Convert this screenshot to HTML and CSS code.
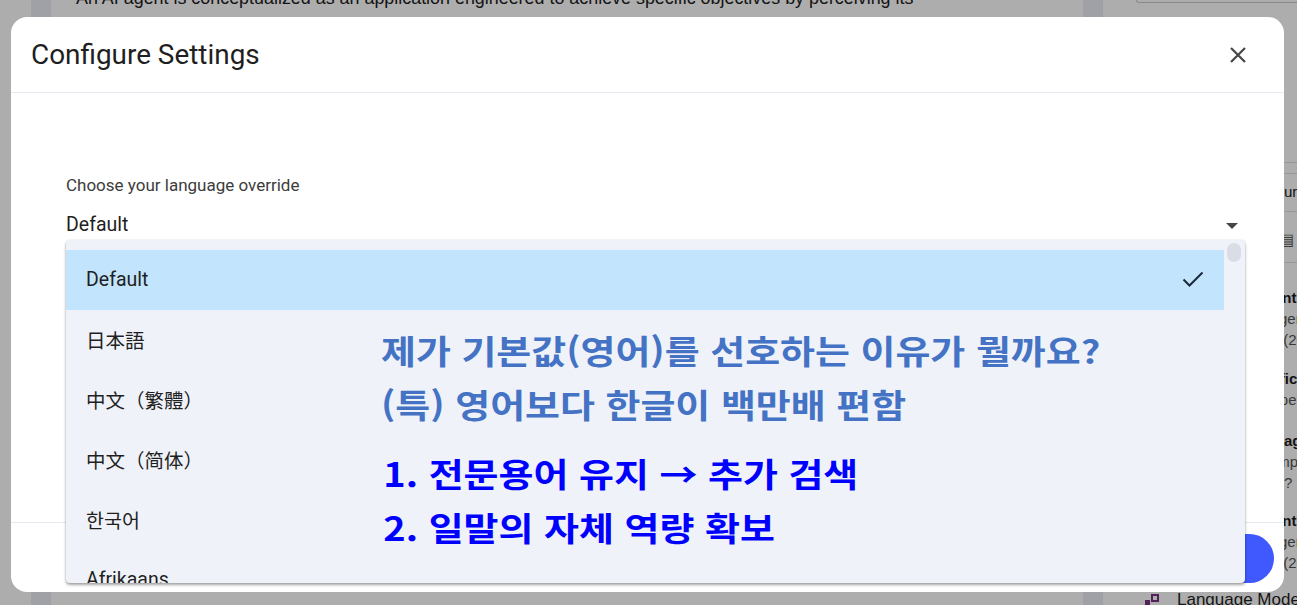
FILE: index.html
```html
<!DOCTYPE html>
<html lang="en">
<head>
<meta charset="utf-8">
<title>Configure Settings</title>
<link rel="stylesheet" href="styles.css">
</head>
<body>
<div class="page">
  <div class="gutter"></div>
  <div class="rail"></div>
  <main class="main">
    <p class="lead">An AI agent is conceptualized as an application engineered to achieve specific objectives by perceiving its</p>
    <div class="spacer"></div>
    <p class="foot-text">Thus an agent can plan, reason and act on its own to attain the desired state within its environment</p>
  </main>
  <div class="rail"></div>
  <aside class="side">
    <div class="side-search"></div>
    <div class="side-row side-row-a"></div>
    <div class="side-row side-row-a2"></div>
    <div class="side-row side-row-b">Features</div>
    <div class="side-row side-row-c"><span class="side-ico">&#9636;</span></div>
    <div class="side-list">
      <div class="side-item">
        <div class="side-title">Agentic AI Systems</div>
        <div class="side-sub">Imagery models</div>
        <div class="side-sub">Vol. (2024)</div>
      </div>
      <div class="side-item short">
        <div class="side-title">Artificial agents</div>
        <div class="side-sub">Scope and limits</div>
      </div>
      <div class="side-item">
        <div class="side-title">Management agents</div>
        <div class="side-sub">Prompting methods</div>
        <div class="side-sub">Why?</div>
      </div>
      <div class="side-item">
        <div class="side-title">Agentic AI Systems</div>
        <div class="side-sub">Imagery models</div>
        <div class="side-sub">Vol. (2023)</div>
      </div>
    </div>
    <div class="side-foot">
      <svg class="side-foot-ico" width="18" height="16" viewBox="0 0 18 16"><rect x="2" y="8" width="5" height="5" fill="#7b2d83"/><rect x="9" y="3" width="6" height="6" fill="none" stroke="#7b2d83" stroke-width="2"/></svg>
      <span>Language Models</span>
    </div>
  </aside>
</div>

<div class="scrim"></div>

<section class="dialog" role="dialog" aria-label="Configure Settings">
  <header class="dlg-head">
    <h1 class="dlg-title">Configure Settings</h1>
    <button class="dlg-close" aria-label="Close">
      <svg width="24" height="24" viewBox="0 0 24 24"><path d="M5 5 L19 19 M19 5 L5 19" stroke="#444746" stroke-width="2.2" fill="none"/></svg>
    </button>
  </header>
  <div class="dlg-body">
    <div class="field-label">Choose your language override</div>
    <div class="select">
      <span class="select-value">Default</span>
      <svg class="select-arrow" width="12" height="6" viewBox="0 0 12 6"><path d="M0 0 H12 L6 6 Z" fill="#444746"/></svg>
    </div>
  </div>
  <footer class="dlg-foot">
    <button class="save-btn">Save</button>
  </footer>

  <div class="menu" role="listbox">
    <ul class="menu-list">
      <li class="menu-item selected">
        <span>Default</span>
        <svg width="24" height="24" viewBox="0 0 24 24"><path d="M2.5 12.5 L8.5 18.5 L21.5 5.5" stroke="#1b2a3a" stroke-width="2" fill="none"/></svg>
      </li>
      <li class="menu-item" lang="ja">日本語</li>
      <li class="menu-item" lang="zh-Hant">中文（繁體）</li>
      <li class="menu-item" lang="zh-Hans">中文（简体）</li>
      <li class="menu-item" lang="ko">한국어</li>
      <li class="menu-item">Afrikaans</li>
    </ul>
    <div class="menu-scroll"><div class="menu-thumb"></div></div>

    <div class="note" lang="ko">
      <p class="note-q">제가 기본값(영어)를 선호하는 이유가 뭘까요?</p>
      <p class="note-q">(특) 영어보다 한글이 백만배 편함</p>
      <p class="note-a first">1. 전문용어 유지 → 추가 검색</p>
      <p class="note-a">2. 일말의 자체 역량 확보</p>
    </div>
  </div>
</section>
</body>
</html>
```

FILE: styles.css
```css
* { box-sizing: border-box; }

html, body {
  margin: 0;
  padding: 0;
  width: 1297px;
  height: 605px;
  overflow: hidden;
}

body {
  position: relative;
  background: #ffffff;
  font-family: Roboto, "Noto Sans CJK JP", "Noto Sans CJK KR", sans-serif;
  color: #1f1f1f;
}

/* ---------- background page ---------- */
.page {
  display: flex;
  height: 605px;
}

.gutter { width: 31px; flex: none; }

.rail {
  width: 20px;
  flex: none;
  background: #ececf6;
}

.main {
  width: 1032px;
  flex: none;
  padding-left: 25px;
  display: flex;
  flex-direction: column;
  font-family: "Liberation Sans", Arial, sans-serif;
}

.lead {
  margin: -12px 0 0;
  font-size: 17.9px;
  line-height: 20px;
  color: #202020;
  white-space: nowrap;
}

.spacer { flex: 1; }

.foot-text {
  margin: 0 0 11px;
  font-size: 17px;
  line-height: 20px;
  color: #202020;
  white-space: nowrap;
}

.side {
  flex: 1;
  display: flex;
  flex-direction: column;
  font-family: "Liberation Sans", Arial, sans-serif;
  font-size: 15px;
  color: #222;
}

.side-search {
  height: 3px;
  margin-left: 33px;
  border: 1px solid #c9c9d3;
  border-top: none;
  border-radius: 0 0 0 6px;
  flex: none;
}

.side-row { flex: none; border-bottom: 1px solid #dedee6; }
.side-row-a { height: 160px; }
.side-row-a2 { height: 11px; }
.side-row-b { height: 38px; padding: 9px 0 0 151px; white-space: nowrap; line-height: 18px; }
.side-row-c { height: 51px; padding: 19px 0 0 176px; color: #555; line-height: 18px; }
.side-ico { font-size: 16px; }

.side-list {
  padding: 24px 0 0 151px;
  white-space: nowrap;
  flex: 1;
}

.side-item { height: 81px; line-height: 21px; }
.side-item.short { height: 62px; }
.side-item:nth-child(3) { height: 80px; }

.side-title { font-weight: 700; color: #1b1b1b; }
.side-sub { color: #555; }

.side-foot {
  flex: none;
  height: 17px;
  display: flex;
  align-items: center;
  gap: 16px;
  padding-left: 40px;
  font-size: 17px;
  color: #1f1f1f;
  white-space: nowrap;
}

/* ---------- scrim ---------- */
.scrim {
  position: absolute;
  inset: 0;
  background: rgba(0, 0, 0, 0.32);
}

/* ---------- dialog ---------- */
.dialog {
  position: absolute;
  left: 11px;
  top: 17px;
  width: 1273px;
  height: 575px;
  background: #ffffff;
  border-radius: 16px;
  display: flex;
  flex-direction: column;
}

.dlg-head {
  height: 76px;
  flex: none;
  display: flex;
  align-items: center;
  justify-content: space-between;
  padding: 0 34px 0 20px;
  border-bottom: 1px solid #e7e8f0;
}

.dlg-title {
  margin: 0;
  font-size: 27.9px;
  font-weight: 400;
  color: #1f1f1f;
}

.dlg-close {
  width: 24px;
  height: 24px;
  padding: 0;
  border: none;
  background: none;
  display: flex;
}

.dlg-body {
  flex: 1;
  padding: 81px 39px 0 55px;
}

.field-label {
  font-size: 17px;
  line-height: 22px;
  color: #3c3c3c;
}

.select {
  margin-top: 14px;
  height: 28px;
  display: flex;
  align-items: center;
  justify-content: space-between;
  padding-right: 7px;
}

.select-value {
  font-size: 19.5px;
  color: #1f1f1f;
}

.select-arrow { margin-top: 3px; }

.dlg-foot {
  height: 70px;
  flex: none;
  border-top: 1px solid #e7e8f0;
  display: flex;
  align-items: center;
  justify-content: flex-end;
  padding: 0 10px 0 0;
}

.save-btn {
  width: 120px;
  height: 49px;
  border: none;
  border-radius: 25px;
  background: #3f59ff;
  color: #fff;
  font: 500 16px Roboto, sans-serif;
  margin-top: 2px;
}

/* ---------- dropdown menu ---------- */
.menu {
  position: absolute;
  left: 55px;
  top: 223px;
  width: 1179px;
  height: 343px;
  background: #eff2f8;
  border-radius: 4px;
  box-shadow: 0 2px 3px rgba(0, 0, 0, 0.35), 0 0 2px rgba(0, 0, 0, 0.12);
  display: flex;
  overflow: hidden;
}

.menu-list {
  list-style: none;
  margin: 0;
  padding: 10px 0 0;
  flex: 1;
}

.menu-item {
  height: 60px;
  display: flex;
  align-items: center;
  justify-content: space-between;
  padding: 0 19px 2px 20px;
  font-size: 19.5px;
  color: #1f1f1f;
}

.menu-item.selected { background: #c2e4fc; }

.menu-scroll {
  width: 21px;
  flex: none;
  padding: 3px 4px 0 3px;
}

.menu-thumb {
  height: 19px;
  border-radius: 7px;
  background: #dadde6;
}

/* ---------- annotation over the menu ---------- */
.note {
  position: absolute;
  left: 315px;
  top: 83px;
  font-family: "Noto Sans CJK KR", sans-serif;
  font-weight: 600;
  font-size: 33px;
  line-height: 54px;
  letter-spacing: 0;
  white-space: nowrap;
  transform: scaleX(1.15);
  transform-origin: 0 0;
}

.note p { margin: 0; }
.note-q { color: #4472c4; }
.note-a { color: #0000ff; padding-left: 2px; }
.note-a.first { margin-top: 15px; }
```
